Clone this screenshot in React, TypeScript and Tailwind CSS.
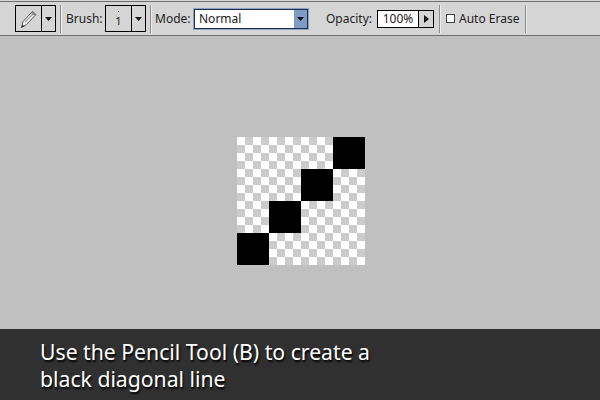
const Caret = ({ right }: { right?: boolean }) =>
  right ? (
    <svg width="5" height="8" viewBox="0 0 5 8">
      <path d="M0 0 L5 4 L0 8 Z" fill="#111" />
    </svg>
  ) : (
    <svg width="7" height="4" viewBox="0 0 7 4">
      <path d="M0 0 H7 L3.5 4 Z" fill="#111" />
    </svg>
  );

const Divider = ({ className }: { className: string }) => (
  <div className={`w-[2px] h-[28px] border-l border-[#8c8c8c] bg-[#eeeeee] bg-clip-content ${className}`} />
);

const Pencil = () => (
  <svg width="18" height="20" viewBox="0 0 18 20">
    <path d="M1.5 18.5 L3 12.5 L12.5 2.5 L16 5.5 L6.5 15.5 Z" fill="#f4f4f4" stroke="#555" strokeWidth="1" />
    <path d="M5 13 L13 5" stroke="#aaa" strokeWidth="1.5" />
    <path d="M1.5 18.5 L2.3 15.5 L4.5 17.5 Z" fill="#333" />
    <path d="M12.5 2.5 L16 5.5 L14.5 7 L11 4 Z" fill="#888" />
  </svg>
);

const Square = ({ black }: { black: boolean }) =>
  black ? (
    <div className="bg-black" />
  ) : (
    <div className="bg-[repeating-conic-gradient(#cccccc_0_25%,#ffffff_0_50%)] bg-size-[16px_16px]" />
  );

const diagonal = [3, 6, 9, 12];

const App = () => {
  return (
    <div className="w-[600px] h-[400px] flex flex-col overflow-hidden bg-[#c0c0c0] font-['Noto_Sans',sans-serif]">
      <div className="h-[36px] shrink-0 pt-[1px] bg-[#d5d5d5]">
        <div className="h-[35px] flex items-center border-y border-[#6e6e6e] bg-[#d5d5d5] text-[12px] text-[#222]">
          <div className="ml-[6px] w-[3px] h-[24px] bg-[radial-gradient(#999999_40%,transparent_45%)] bg-size-[2px_2px]" />
          <div className="ml-[6px] w-[27px] h-[27px] flex items-center justify-center border border-black">
            <Pencil />
          </div>
          <div className="w-[14px] h-[27px] flex items-center justify-center border border-l-0 border-black">
            <Caret />
          </div>
          <Divider className="ml-[4px]" />
          <span className="ml-[4px] w-[35px]">Brush:</span>
          <div className="ml-[4px] w-[27px] h-[27px] flex flex-col items-center border border-black">
            <div className="mt-[5px] w-[1px] h-[1px] bg-black" />
            <span className="mt-[2px] text-[11px] leading-[14px]">1</span>
          </div>
          <div className="w-[14px] h-[27px] flex items-center justify-center border border-l-0 border-black">
            <Caret />
          </div>
          <Divider className="ml-[4px]" />
          <span className="ml-[3px] w-[35px]">Mode:</span>
          <div className="ml-[4px] w-[114px] h-[20px] flex border border-[#1c2f52] bg-white shadow-[0_0_0_1px_#8ea2c0]">
            <span className="flex-1 pl-[4px] leading-[18px]">Normal</span>
            <div className="w-[13px] flex items-center justify-center bg-[#7f9bc4]">
              <Caret />
            </div>
          </div>
          <span className="ml-[18px] w-[45px]">Opacity:</span>
          <div className="ml-[6px] w-[57px] h-[18px] flex border border-black">
            <span className="w-[40px] bg-white text-center leading-[16px]">100%</span>
            <div className="flex-1 flex items-center justify-center border-l border-black">
              <Caret right />
            </div>
          </div>
          <Divider className="ml-[5px]" />
          <div className="ml-[5px] w-[9px] h-[9px] border border-[#444] bg-white" />
          <span className="ml-[4px] w-[60px] whitespace-nowrap">Auto Erase</span>
          <Divider className="ml-[6px]" />
        </div>
      </div>
      <div className="flex-1 pl-[237px] pt-[101px]">
        <div className="w-[128px] h-[128px] grid grid-cols-4 grid-rows-4">
          {Array.from({ length: 16 }, (_, i) => (
            <Square key={i} black={diagonal.includes(i)} />
          ))}
        </div>
      </div>
      <div className="h-[71px] shrink-0 pl-[40px] pt-[9px] bg-[#303030] text-[21.2px] leading-[27px] text-white [text-shadow:1px_2px_2px_#000]">
        <p>Use the Pencil Tool (B) to create a</p>
        <p>black diagonal line</p>
      </div>
    </div>
  );
};

export default App;
